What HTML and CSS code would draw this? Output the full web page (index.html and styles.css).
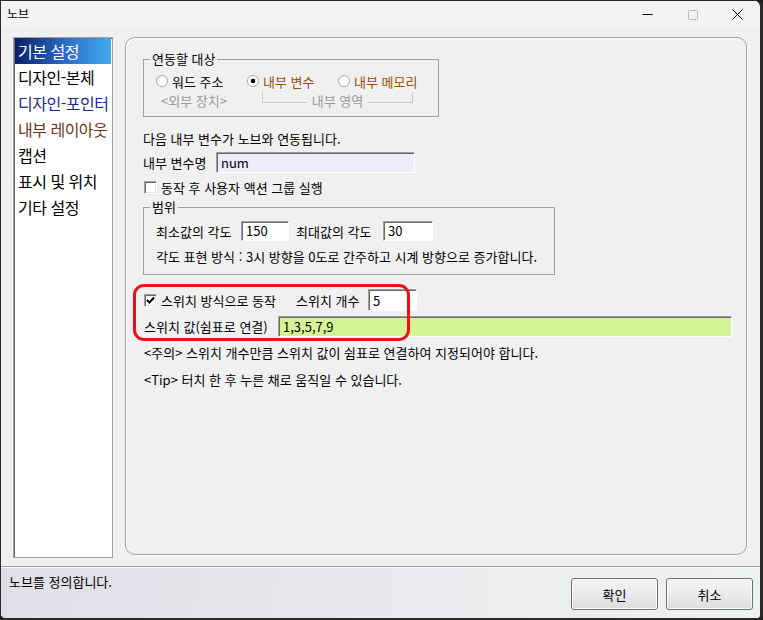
FILE: index.html
```html
<!DOCTYPE html>
<html lang="ko">

<head>
    <meta charset="UTF-8">
    <meta name="viewport" content="width=device-width, initial-scale=1.0">
    <title>노브</title>
    <link rel="stylesheet" href="styles.css">
</head>

<body>
    <div class="window">
        <div class="titlebar">
            <span class="title">노브</span>
            <div class="controls">
                <span class="ctrl">
                    <svg width="11" height="11" viewBox="0 0 11 11"><path d="M0.5 5.5 H10.5" stroke="#000" stroke-width="1"/></svg>
                </span>
                <span class="ctrl">
                    <svg width="11" height="11" viewBox="0 0 11 11"><rect x="1.5" y="1.5" width="9" height="9" rx="1" fill="none" stroke="#b8b8b8" stroke-width="1"/></svg>
                </span>
                <span class="ctrl">
                    <svg width="11" height="11" viewBox="0 0 11 11"><path d="M0.5 0.5 L10.5 10.5 M10.5 0.5 L0.5 10.5" stroke="#000" stroke-width="1"/></svg>
                </span>
            </div>
        </div>

        <div class="main">
            <ul class="nav">
                <li class="active">기본 설정</li>
                <li>디자인-본체</li>
                <li class="blue">디자인-포인터</li>
                <li class="brown">내부 레이아웃</li>
                <li>캡션</li>
                <li>표시 및 위치</li>
                <li>기타 설정</li>
            </ul>

            <div class="panel">
                <div class="group target">
                    <span class="legend">연동할 대상</span>
                    <div class="radio-row">
                        <label class="radio"><span class="dot"></span>워드 주소</label>
                        <label class="radio on accent"><span class="dot"></span>내부 변수</label>
                        <label class="radio accent"><span class="dot"></span>내부 메모리</label>
                    </div>
                    <div class="sub-row">
                        <span class="sub-ext">&lt;외부 장치&gt;</span>
                        <div class="bracket">
                            <span class="line left"></span>
                            <span class="bracket-text">내부 영역</span>
                            <span class="line right"></span>
                        </div>
                    </div>
                </div>

                <p class="text intro">다음 내부 변수가 노브와 연동됩니다.</p>
                <div class="field-row">
                    <span class="name-label">내부 변수명</span>
                    <div class="input name-input">num</div>
                </div>
                <label class="check"><span class="box"></span>동작 후 사용자 액션 그룹 실행</label>

                <div class="group range">
                    <span class="legend">범위</span>
                    <div class="range-row">
                        <span class="min-label">최소값의 각도</span>
                        <div class="input min-input">150</div>
                        <span class="max-label">최대값의 각도</span>
                        <div class="input max-input">30</div>
                    </div>
                    <p class="text range-note">각도 표현 방식 : 3시 방향을 0도로 간주하고 시계 방향으로 증가합니다.</p>
                </div>

                <div class="switch">
                    <div class="switch-row">
                        <label class="check checked">
                            <span class="box">
                                <svg width="9" height="9" viewBox="0 0 9 9"><path d="M1 4 L3.5 6.5 L8 1.5" fill="none" stroke="#000" stroke-width="2"/></svg>
                            </span>스위치 방식으로 동작
                        </label>
                        <span class="count-label">스위치 개수</span>
                        <div class="input count-input">5</div>
                    </div>
                    <div class="switch-row second">
                        <span class="values-label">스위치 값(쉼표로 연결)</span>
                        <div class="input values-input">1,3,5,7,9</div>
                    </div>
                    <div class="highlight"></div>
                </div>

                <p class="text note">&lt;주의&gt; 스위치 개수만큼 스위치 값이 쉼표로 연결하여 지정되어야 합니다.</p>
                <p class="text tip">&lt;Tip&gt; 터치 한 후 누른 채로 움직일 수 있습니다.</p>
            </div>
        </div>

        <div class="footer">
            <span class="status">노브를 정의합니다.</span>
            <div class="buttons">
                <button class="btn">확인</button>
                <button class="btn">취소</button>
            </div>
        </div>
    </div>
</body>

</html>
```

FILE: styles.css
```css
* {
    box-sizing: border-box;
    margin: 0;
    padding: 0;
}

html,
body {
    background: #1c1c1c;
}

body {
    font-family: "Noto Sans CJK KR", "Noto Sans", sans-serif;
    font-size: 13px;
    color: #000;
}

.window {
    width: 763px;
    height: 620px;
    background: #f0f0f0;
    border: 1px solid #2a2a2a;
    border-right-width: 3px;
    border-bottom-width: 2px;
    border-radius: 0 8px 6px 6px;
    display: flex;
    flex-direction: column;
    overflow: hidden;
}

.titlebar {
    height: 26px;
    flex-shrink: 0;
    background: #f3f3f3;
    display: flex;
    align-items: center;
    justify-content: space-between;
    padding-left: 6px;
}

.title {
    font-size: 12px;
    line-height: 14px;
}

.controls {
    display: flex;
    align-self: stretch;
}

.ctrl {
    width: 45px;
    display: flex;
    align-items: center;
    justify-content: center;
}

.main {
    flex: 1;
    display: flex;
    align-items: flex-start;
    padding: 10px 0 0 12px;
}

.nav {
    list-style: none;
    width: 100px;
    height: 521px;
    background: #fff;
    border: 1px solid #a0a0a0;
    box-shadow: inset 1px 1px 0 #6a6a6a;
    padding: 0 1px;
}

.nav li {
    height: 26px;
    line-height: 26px;
    font-size: 16px;
    letter-spacing: -0.5px;
    padding-left: 3px;
    white-space: nowrap;
    overflow: hidden;
}

.nav li.active {
    background: linear-gradient(90deg, #0a2068, #2f6fc8 55%, #40aaf0);
    color: #fff;
}

.nav li.blue {
    color: #1c2a88;
}

.nav li.brown {
    color: #6e3414;
}

.panel {
    width: 622px;
    height: 518px;
    margin-left: 12px;
    border: 1px solid #a0a0a0;
    border-radius: 10px;
    box-shadow: inset 1px 1px 0 #fff, 1px 1px 0 #fff;
    padding: 21px 0 0 17px;
}

.group {
    position: relative;
    border: 1px solid #a0a0a0;
}

.legend {
    position: absolute;
    top: -8px;
    left: 6px;
    padding: 0 2px;
    line-height: 14px;
    background: #f0f0f0;
    white-space: nowrap;
}

.target {
    width: 296px;
    padding: 12px 0 8px 12px;
}

.radio-row {
    display: flex;
}

.radio {
    width: 91px;
    height: 18px;
    display: flex;
    align-items: center;
    gap: 4px;
    white-space: nowrap;
}

.radio.accent {
    color: #985000;
}

.dot {
    width: 12px;
    height: 12px;
    flex-shrink: 0;
    border-radius: 50%;
    border: 1px solid #a8a8a8;
    background: radial-gradient(circle at 60% 60%, #fff 55%, #e2e2e2);
}

.radio.on .dot {
    background: radial-gradient(circle, #000 0 2px, #fff 2.6px);
}

.sub-row {
    display: flex;
    height: 14px;
    margin: 4px 0 0 5px;
    line-height: 14px;
    color: #9a9a9a;
    white-space: nowrap;
}

.sub-ext {
    width: 101px;
}

.bracket {
    display: flex;
    width: 151px;
    height: 14px;
}

.bracket .line {
    flex: 1;
    height: 11px;
    margin-top: -2px;
    border-bottom: 1px solid #c8c8c8;
}

.bracket .line.left {
    border-left: 1px solid #c8c8c8;
}

.bracket .line.right {
    border-right: 1px solid #c8c8c8;
}

.bracket-text {
    padding: 0 5px;
}

.text {
    line-height: 14px;
    white-space: nowrap;
}

.intro {
    margin-top: 15px;
}

.field-row {
    display: flex;
    align-items: center;
    height: 21px;
    margin-top: 6px;
    white-space: nowrap;
}

.name-label {
    width: 73px;
}

.input {
    background: #fff;
    border-top: 1px solid #a0a0a0;
    border-left: 1px solid #a0a0a0;
    border-right: 1px solid #fff;
    border-bottom: 1px solid #fff;
    box-shadow: inset 1px 1px 0 #696969;
    padding: 1px 0 0 4px;
    white-space: nowrap;
}

.name-input {
    width: 199px;
    height: 21px;
    line-height: 18px;
    background: #ececfd;
}

.check {
    display: flex;
    align-items: center;
    gap: 4px;
    height: 18px;
    margin: 5px 0 0 1px;
    white-space: nowrap;
}

.box {
    width: 13px;
    height: 13px;
    flex-shrink: 0;
    background: #fff;
    border-top: 1px solid #a0a0a0;
    border-left: 1px solid #a0a0a0;
    border-right: 1px solid #fff;
    border-bottom: 1px solid #fff;
    box-shadow: inset 1px 1px 0 #696969, inset -1px -1px 0 #e3e3e3;
    display: flex;
    align-items: center;
    justify-content: center;
}

.range {
    width: 412px;
    margin-top: 11px;
    padding: 13px 0 10px 12px;
}

.range-row {
    display: flex;
    align-items: center;
    height: 20px;
    white-space: nowrap;
}

.min-label {
    width: 85px;
}

.min-input {
    width: 48px;
    height: 20px;
    line-height: 16px;
}

.max-label {
    width: 87px;
    margin-left: 7px;
}

.max-input {
    width: 50px;
    height: 20px;
    line-height: 16px;
}

.range-note {
    margin-top: 9px;
}

.switch {
    position: relative;
    margin-top: 14px;
}

.switch-row {
    display: flex;
    align-items: center;
    height: 22px;
    white-space: nowrap;
}

.switch-row .check {
    width: 152px;
    margin: 0 0 0 1px;
}

.count-label {
    width: 72px;
}

.count-input {
    width: 49px;
    height: 22px;
    line-height: 19px;
}

.switch-row.second {
    height: 21px;
    margin-top: 5px;
    padding-left: 1px;
}

.values-label {
    width: 134px;
}

.values-input {
    width: 454px;
    height: 21px;
    line-height: 18px;
    background: #d6f396;
}

.highlight {
    position: absolute;
    left: -10px;
    top: -5px;
    width: 277px;
    height: 57px;
    border: 3px solid #ee1111;
    border-radius: 11px;
}

.note {
    margin-top: 9px;
    padding-left: 1px;
}

.tip {
    margin-top: 13px;
    padding-left: 1px;
}

.footer {
    height: 52px;
    flex-shrink: 0;
    border-top: 1px solid #a0a0a0;
    box-shadow: inset 0 1px 0 #fafafa;
    background: linear-gradient(100deg, #dfdfe8, #e9eaee 50%, #eef2ee);
    display: flex;
    justify-content: space-between;
    padding: 0 7px 0 8px;
}

.status {
    padding-top: 8px;
    line-height: 14px;
}

.buttons {
    display: flex;
    gap: 8px;
    padding-top: 11px;
}

.btn {
    width: 87px;
    height: 32px;
    font-family: inherit;
    font-size: 13px;
    color: #000;
    border: 1px solid #707070;
    border-radius: 3px;
    background: linear-gradient(#f4f4f4, #ebebeb 50%, #dcdcdc);
    box-shadow: inset 0 0 0 1px #fcfcfc;
}
```
